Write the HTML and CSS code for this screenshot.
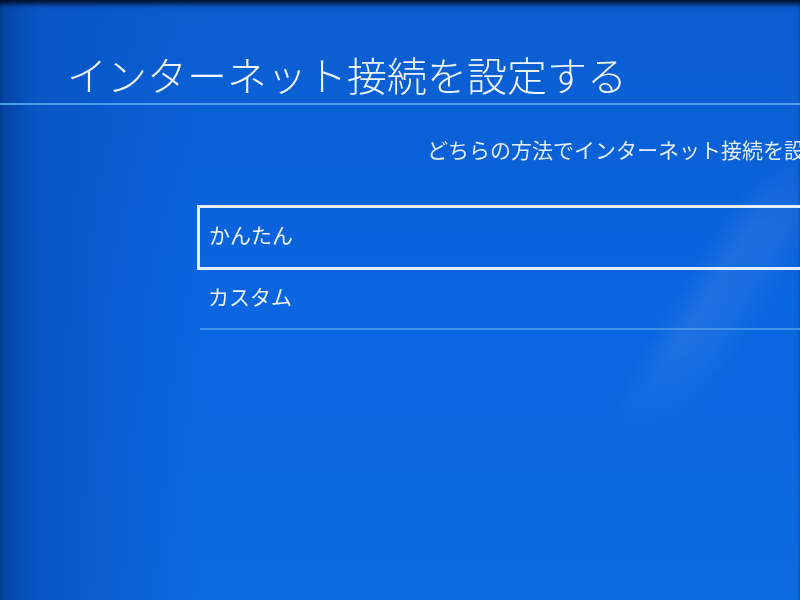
FILE: index.html
```html
<!DOCTYPE html>
<html lang="ja">
<head>
    <meta charset="UTF-8">
    <meta name="viewport" content="width=device-width, initial-scale=1.0">
    <title>インターネット接続を設定する</title>
    <link rel="stylesheet" href="styles.css">
</head>
<body>

    <div class="tela">
        <div class="cabecalho">
            <h1 class="titulo">インターネット接続を設定する</h1>
        </div>

        <p class="pergunta">どちらの方法でインターネット接続を設定しますか？</p>

        <ul class="opcoes">
            <li class="opcao ativa">かんたん</li>
            <li class="opcao">カスタム</li>
        </ul>
    </div>

</body>
</html>
```

FILE: styles.css
```css
html, body {
    margin: 0;
    padding: 0;
    height: 100%;
    overflow: hidden;
}
body {
    font-family: "Noto Sans CJK JP", "Noto Sans", sans-serif;
    color: #eef4fc;
    background-color: #0a64dc;
    background-image:
        linear-gradient(to right, #0544a2 0, #0856c6 40px, rgba(11, 102, 222, 0) 200px),
        linear-gradient(to bottom, #0a5dcf 0, #0a65e0 300px, #0c6bde 600px);
    box-shadow: inset 0 6px 5px -2px #02102a;
}
/* faixa clara diagonal do fundo, some antes do fim da tela */
body::before {
    content: "";
    position: fixed;
    inset: 0;
    z-index: -1;
    pointer-events: none;
    background: linear-gradient(122deg, transparent 73%, rgba(255, 255, 255, 0.08) 76%, rgba(255, 255, 255, 0.06) 79%, transparent 82%);
    -webkit-mask-image: linear-gradient(to bottom, transparent 25%, #000 38%, #000 58%, transparent 74%);
    mask-image: linear-gradient(to bottom, transparent 25%, #000 38%, #000 58%, transparent 74%);
}
.tela {
    height: 100%;
}
.cabecalho {
    padding: 54px 0 8px 67px;
    border-bottom: 2px solid #4c9ee8;
}
.titulo {
    margin: 0;
    font-size: 40px;
    line-height: 41px;
    font-weight: 300;
    white-space: nowrap;
}
.pergunta {
    margin: 34px 0 0 427px;
    font-size: 21px;
    line-height: 21px;
    white-space: nowrap;
    color: #e3edf9;
}
.opcoes {
    list-style: none;
    margin: 45px -20px 0 0;
    padding: 0;
}
.opcao {
    margin-left: 200px;
    padding: 16px 0 21px 8px;
    font-size: 21px;
    line-height: 21px;
    border-bottom: 2px solid #3f93e6;
}
.opcao.ativa {
    margin-left: 197px;
    padding: 16px 0 22px 9px;
    border: 3px solid #e4eefb;
}
```
